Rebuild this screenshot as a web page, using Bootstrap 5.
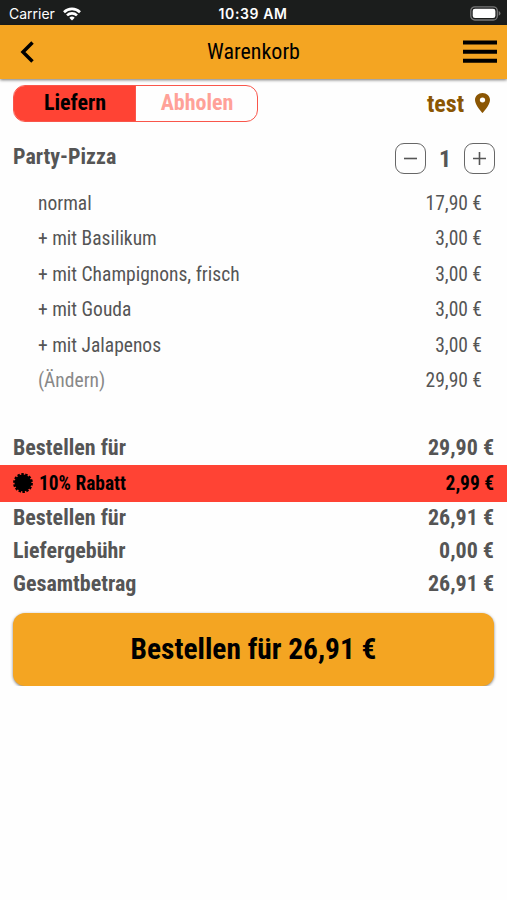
<!DOCTYPE html>
<html lang="de">
<head>
<meta charset="utf-8">
<meta name="viewport" content="width=device-width, initial-scale=1">
<title>Warenkorb</title>
<link href="https://cdn.jsdelivr.net/npm/bootstrap@5.3.0/dist/css/bootstrap.min.css" rel="stylesheet">
<style>
body{font-family:"Roboto Condensed",Roboto,sans-serif;font-stretch:75%;color:#555;background:#fefefe;line-height:1}
.status{height:25px;background:#1b1d1c;color:#fff;font-family:Inter,sans-serif;font-stretch:normal;font-size:14px;padding:2px 6px 0 9px}
.status>*{flex:1 1 0}
.clock{letter-spacing:.6px}
.topbar{height:54px;background:#f4a522;color:#000;font-size:22px;padding:0 10px 1px 19px;box-shadow:0 1px 3px rgba(0,0,0,.55)}
.topbar>*{flex:1 1 0}
.topbar .caption{margin-left:-9px}
.px{padding-left:13px;padding-right:13px}
.toprow{padding-top:6px}
.mode{width:245px;height:37px;border:1.5px solid #f9564b;border-radius:12px;overflow:hidden;font-size:22px;font-weight:700}
.mode button{border:0;background:none;padding:0 0 1px 1px;font:inherit;flex:1}
.mode .on{background:#ff4334;color:#000}
.mode .off{color:#ffa198;border-left:1px solid #f9564b}
.place{color:#8b5603;font-size:24px;font-weight:700}
.pin{margin:0 4px 2px 11px}
.big{font-size:22px;font-weight:700}
.item{padding-top:21px}
.stepper{margin-right:-1px}
.qty{width:38px;font-size:24px}
.step{width:31px;height:31px;border:1.3px solid #666;border-radius:9px;background:none;padding:0}
.extras{padding:12px 25px 0 38px;font-size:19.500px}
.extras li{height:35.4px}
.change{color:#888}
.totals{margin-top:33.600px}
.sum{height:33px}
.promo{height:37px;background:#ff4334;color:#000;font-size:19.400px;font-weight:700}
.promo svg{margin-right:6px}
.order{height:73px;border-radius:12px;background:#f4a522;color:#000;font-size:29.400px;font-weight:700;box-shadow:0 1px 3px rgba(0,0,0,.5);border:0}
.orderwrap{padding-top:12px}
</style>
</head>
<body>
<div class="status d-flex align-items-center">
  <div class="d-flex align-items-center gap-2"><span>Carrier</span>
    <svg width="18" height="14" viewBox="0 0 18 14" fill="none" stroke="#fff" stroke-width="2.6"><path d="M1 5.2a11.4 11.4 0 0 1 16 0M4 8.4a7.1 7.1 0 0 1 10 0"/><path d="M6.3 10.7a3.9 3.9 0 0 1 5.4 0L9 13.5z" fill="#fff" stroke="none"/></svg></div>
  <div class="clock text-center fw-semibold"><span class="me-1">10:39 AM</span></div>
  <div class="text-end lh-1"><svg width="31" height="15" viewBox="0 0 31 15"><rect x=".8" y=".8" width="26.5" height="13.2" rx="4" fill="none" stroke="#777" stroke-width="1.3"/><rect x="2.7" y="2.7" width="22.7" height="9.4" rx="2.3" fill="#fff"/><path d="M28.7 5q1.8 1 1.8 2.4t-1.8 2.4z" fill="#777"/></svg></div>
</div>
<header class="topbar d-flex align-items-center">
  <div><svg width="16" height="22" viewBox="0 0 16 22" fill="none" stroke="#000" stroke-width="3.5"><path d="M13.5 1.5 4 11l9.500 9.500"/></svg></div>
  <div class="caption text-center">Warenkorb</div>
  <div class="text-end"><svg width="34" height="23" viewBox="0 0 34 23"><path d="M0 .5h34v4H0zm0 9.200h34v4H0zm0 9.100h34v4H0z"/></svg></div>
</header>
<main>
  <div class="px toprow d-flex justify-content-between align-items-center">
    <div class="mode d-flex"><button class="on">Liefern</button><button class="off">Abholen</button></div>
    <div class="place d-flex align-items-center"><span>test</span><svg class="pin" width="15" height="20" viewBox="5 2 14 20" preserveAspectRatio="none" fill="#8b5603"><path d="M12 2C8.130 2 5 5.130 5 9c0 5.250 7 13 7 13s7-7.750 7-13c0-3.870-3.130-7-7-7zm0 9.500a2.500 2.500 0 0 1 0-5 2.500 2.500 0 0 1 0 5z"/></svg></div>
  </div>
  <div class="px item d-flex justify-content-between align-items-center">
    <span class="big pb-1">Party-Pizza</span>
    <div class="stepper d-flex align-items-center">
      <button class="step d-flex align-items-center justify-content-center"><svg width="15" height="15" viewBox="0 0 15 15" stroke="#555" stroke-width="1.600"><path d="M1 7.500h13"/></svg></button>
      <span class="big qty text-center">1</span>
      <button class="step d-flex align-items-center justify-content-center"><svg width="15" height="15" viewBox="0 0 15 15" stroke="#555" stroke-width="1.600"><path d="M1 7.500h13M7.500 1v13"/></svg></button>
    </div>
  </div>
  <ul class="extras list-unstyled mb-0">
    <li class="d-flex justify-content-between align-items-center"><span>normal</span><span>17,90 €</span></li>
    <li class="d-flex justify-content-between align-items-center"><span>+ mit Basilikum</span><span>3,00 €</span></li>
    <li class="d-flex justify-content-between align-items-center"><span>+ mit Champignons, frisch</span><span>3,00 €</span></li>
    <li class="d-flex justify-content-between align-items-center"><span>+ mit Gouda</span><span>3,00 €</span></li>
    <li class="d-flex justify-content-between align-items-center"><span>+ mit Jalapenos</span><span>3,00 €</span></li>
    <li class="d-flex justify-content-between align-items-center"><span class="change">(Ändern)</span><span>29,90 €</span></li>
  </ul>
  <div class="totals sum px big d-flex justify-content-between align-items-center"><span>Bestellen für</span><span>29,90 €</span></div>
  <div class="promo px d-flex align-items-center"><svg width="20" height="20" viewBox="-10 -10 20 20"><circle r="8.500"/><circle r="8.900" fill="none" stroke="#000" stroke-width="2" stroke-dasharray="2.500 1.494"/></svg><span>10% Rabatt</span><span class="ms-auto">2,99 €</span></div>
  <div class="sum px big d-flex justify-content-between align-items-center"><span>Bestellen für</span><span>26,91 €</span></div>
  <div class="sum px big d-flex justify-content-between align-items-center"><span>Liefergebühr</span><span>0,00 €</span></div>
  <div class="sum px big d-flex justify-content-between align-items-center"><span>Gesamtbetrag</span><span>26,91 €</span></div>
  <div class="px orderwrap"><button class="order w-100">Bestellen für 26,91 €</button></div>
</main>
<script src="https://cdn.jsdelivr.net/npm/bootstrap@5.3.0/dist/js/bootstrap.bundle.min.js"></script>
</body>
</html>
